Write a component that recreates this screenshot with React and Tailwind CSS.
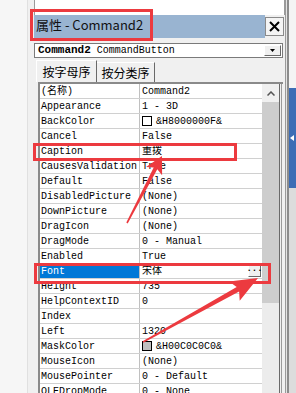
import React from "react";

const rows = [
  ["(名称)", "Command2"],
  ["Appearance", "1 - 3D"],
  ["BackColor", "&H8000000F&", "white"],
  ["Cancel", "False"],
  ["Caption", "重拨"],
  ["CausesValidation", "True"],
  ["Default", "False"],
  ["DisabledPicture", "(None)"],
  ["DownPicture", "(None)"],
  ["DragIcon", "(None)"],
  ["DragMode", "0 - Manual"],
  ["Enabled", "True"],
  ["Font", "宋体", null, true],
  ["Height", "735"],
  ["HelpContextID", "0"],
  ["Index", ""],
  ["Left", "1320"],
  ["MaskColor", "&H00C0C0C0&", "gray"],
  ["MouseIcon", "(None)"],
  ["MousePointer", "0 - Default"],
  ["OLEDropMode", "0 - None"],
];

function Row({ name, value, swatch, selected }) {
  return (
    <div className="h-[15px] shrink-0 flex border-b border-[#d0d0d0]">
      <div
        className={
          selected
            ? "w-[100px] shrink-0 pl-px flex items-center bg-[#0078d7] text-white border-r border-[#c0c0c0]"
            : "w-[100px] shrink-0 pl-px flex items-center text-black border-r border-[#c0c0c0]"
        }
      >
        {name}
      </div>
      <div className="flex-1 flex items-center pl-[2px] text-black">
        {swatch === "white" && <span className="w-[10px] h-[10px] mr-[4px] border border-black bg-white" />}
        {swatch === "gray" && <span className="w-[10px] h-[10px] mr-[4px] border border-black bg-[#c0c0c0]" />}
        <span className="whitespace-pre">{value}</span>
        {selected && (
          <span className="ml-auto mr-px w-[13px] h-[12px] flex items-center justify-center bg-[#f0f0f0] border border-t-white border-l-white border-r-[#696969] border-b-[#696969] text-[9px] font-bold leading-none pb-[3px]">
            ...
          </span>
        )}
      </div>
    </div>
  );
}

export default function App() {
  return (
    <div className="w-[296px] h-[393px] relative overflow-hidden bg-[#f0f0f0] flex">
      {/* left margin */}
      <div className="w-[34px] shrink-0 flex">
        <div className="w-[27px] bg-[#f6f6f6]" />
        <div className="w-px bg-[#e0e0e0]" />
        <div className="flex-1" />
      </div>

      {/* properties window */}
      <div className="w-[251px] shrink-0 flex flex-col">
        <div className="h-[15px] shrink-0 bg-white border-x border-[#9a9a9a]" />

        {/* title bar */}
        <div className="h-[23px] shrink-0 flex">
          <div className="w-[231px] bg-[#99b4d1] flex items-center pl-[2px] pb-[3px] text-[13px] text-[#111] font-['Noto_Sans_CJK_SC',sans-serif]">
            属性 - Command2
          </div>
          <div className="w-[19px] h-[19px] mt-[2px] flex items-center justify-center bg-[#f4f4f4] border border-[#8a8a8a]">
            <svg width="13" height="13" viewBox="0 0 13 13">
              <path d="M2 2 L11 11 M11 2 L2 11" stroke="#000" strokeWidth="2" />
            </svg>
          </div>
        </div>

        {/* object combo */}
        <div className="mt-[5px] h-[15px] w-[249px] shrink-0 flex items-center bg-white border border-[#7a7a7a] font-['Liberation_Mono',monospace] text-black">
          <span className="pl-[3px] text-[11px] font-bold leading-none">Command2</span>
          <span className="pl-[6px] text-[10px] leading-none">CommandButton</span>
          <span className="ml-auto mr-px w-[17px] h-[11px] flex items-center justify-center bg-[#f0f0f0] border border-t-white border-l-white border-r-[#696969] border-b-[#696969]">
            <svg width="5" height="3" viewBox="0 0 5 3">
              <path d="M0 0 H5 L2.5 3 Z" fill="#000" />
            </svg>
          </span>
        </div>

        {/* tabs */}
        <div className="mt-[2px] h-[22px] shrink-0 flex items-end pl-[2px] text-[12px] text-black font-['Noto_Sans_CJK_SC',sans-serif]">
          <div className="w-[61px] h-[22px] flex items-center justify-center bg-[#f0f0f0] border-t border-l border-white border-r border-r-[#696969]">
            按字母序
          </div>
          <div className="w-[58px] h-[20px] flex items-center justify-center border-t border-white border-r border-r-[#696969]">
            按分类序
          </div>
        </div>

        {/* property grid */}
        <div className="ml-[4px] w-[245px] flex-1 flex border-l-2 border-t-2 border-[#8a8a8a] bg-white">
          <div className="w-[222px] flex flex-col text-[10px] font-['Liberation_Mono','Noto_Sans_CJK_SC',monospace]">
            {rows.map(([n, v, s, sel]) => (
              <Row key={n} name={n} value={v} swatch={s} selected={sel} />
            ))}
          </div>
          <div className="w-[17px] flex flex-col bg-[#ececec]">
            <div className="h-[18px] flex items-center justify-center bg-[#f0f0f0]">
              <svg width="8" height="5" viewBox="0 0 8 5">
                <path d="M0.5 4.5 L4 1 L7.5 4.5" stroke="#555" strokeWidth="1.5" fill="none" />
              </svg>
            </div>
            <div className="h-[201px] bg-[#cdcdcd]" />
          </div>
          <div className="w-px bg-[#6a6a6a]" />
          <div className="w-px bg-[#f0f0f0]" />
          <div className="w-px bg-[#9a9a9a]" />
          <div className="w-px bg-[#f0f0f0]" />
        </div>
      </div>

      {/* right edge */}
      <div className="flex-1 flex">
        <div className="w-px bg-[#9a9a9a]" />
        <div className="w-px bg-[#e4e4e4]" />
        <div className="w-[2px] bg-[#8c8c8c]" />
        <div className="flex-1 flex flex-col">
          <div className="h-[88px] bg-[#f4f4f4]" />
          <div className="h-[100px] bg-[#3d6db5] flex items-center pl-px">
            <svg width="4" height="6" viewBox="0 0 4 6">
              <path d="M0 3 L4 0 V6 Z" fill="#fff" />
            </svg>
          </div>
          <div className="flex-1 bg-[#dcdcdc]" />
        </div>
      </div>

      {/* annotations */}
      <div className="absolute left-[30px] top-[9px] w-[123px] h-[32px] border-[3px] border-[#ec3a3f]" />
      <div className="absolute left-[33px] top-[143px] w-[204px] h-[18px] border-[3px] border-[#ec3a3f]" />
      <div className="absolute left-[34px] top-[263px] w-[237px] h-[21px] border-[3px] border-[#ec3a3f]" />
      <svg className="absolute left-0 top-0" width="296" height="393" viewBox="0 0 296 393">
        <polygon
          fill="#ec3a3f"
          points="126.3,222.6 153.7,167.5 146.1,166.9 162,156 162.1,175.2 157.3,169.3 127.7,223.4"
        />
        <polygon
          fill="#ec3a3f"
          points="142.6,341.3 236.7,287 229.1,281.5 258,278 239.7,300.7 239.1,291.4 143.4,342.7"
        />
      </svg>
    </div>
  );
}
